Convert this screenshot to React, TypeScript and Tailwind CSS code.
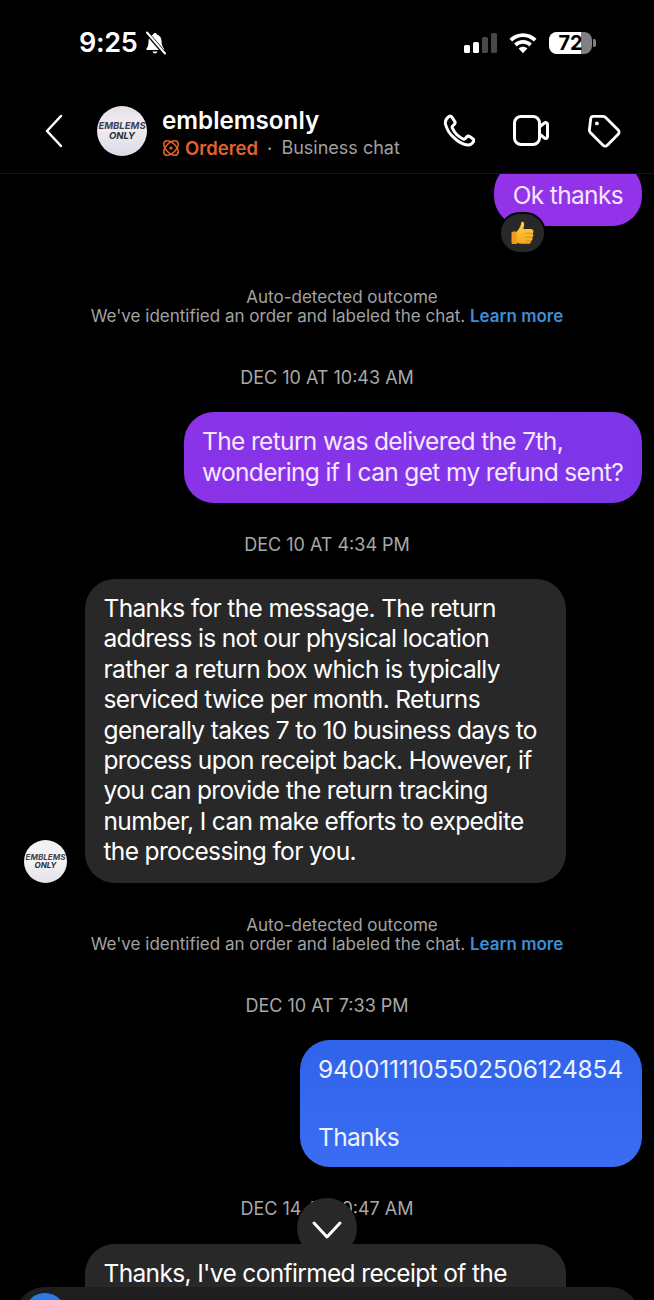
import React from "react";

function Logo({ big }: { big?: boolean }) {
  return (
    <div
      className={
        big
          ? "w-[50px] h-[50px] shrink-0 rounded-full bg-[linear-gradient(180deg,#e6dfe4_0%,#f0eef0_40%,#d9dbe6_100%)] flex flex-col items-center justify-center overflow-hidden"
          : "w-[43px] h-[43px] shrink-0 rounded-full bg-[linear-gradient(180deg,#f2f0f2_0%,#f5f4f5_45%,#e2e2e8_100%)] flex flex-col items-center justify-center overflow-hidden"
      }
    >
      <span
        className={
          big
            ? "text-[9.500px] leading-[10px] font-bold italic text-[#3f3f5c] whitespace-nowrap"
            : "text-[8px] leading-[8px] font-bold italic text-[#44444e] whitespace-nowrap"
        }
      >
        EMBLEMS
      </span>
      <span
        className={
          big
            ? "text-[9.500px] leading-[10px] font-bold italic text-[#2b2b35]"
            : "text-[8px] leading-[8px] font-bold italic text-[#2b2b35]"
        }
      >
        ONLY
      </span>
    </div>
  );
}

function StatusBar() {
  return (
    <div className="h-[88px] flex items-start justify-between pt-[25px] pl-[79px] pr-[58px]">
      <div className="flex items-center gap-[7px]">
        <span className="text-[27px] leading-[36px] font-semibold text-white tracking-[-0.3px]">9:25</span>
        <svg width="22" height="24" viewBox="0 0 22 24" className="text-white">
          <path
            fill="currentColor"
            d="M11 2c1 0 1.700.7 1.800 1.500 3 .8 4.700 3.300 4.700 6.500 0 3.500.8 5.500 2.500 7.500.4.500.1 1.500-.7 1.500H3.200c-.8 0-1.100-1-.7-1.500C4.200 15.500 4.500 13.500 4.500 10c0-3.200 1.700-5.700 4.700-6.500C9.300 2.700 10 2 11 2zM8.500 20.500h5c-.3 1.300-1.300 2-2.500 2s-2.200-.7-2.500-2z"
          />
          <path d="M2 1l19 22" stroke="#000" strokeWidth="4" />
          <path d="M3 1.500l18 21" stroke="#fff" strokeWidth="2" strokeLinecap="round" />
        </svg>
      </div>
      <div className="flex items-center gap-[12px] h-[36px]">
        <div className="flex items-end gap-[3px] h-[22px] pb-[1px]">
          <div className="w-[6px] h-[8px] rounded-[1.500px] bg-white" />
          <div className="w-[6px] h-[11px] rounded-[1.500px] bg-white" />
          <div className="w-[6px] h-[16px] rounded-[1.500px] bg-[#484848]" />
          <div className="w-[6px] h-[20px] rounded-[1.500px] bg-[#484848]" />
        </div>
        <svg width="28" height="21" viewBox="0 0 30 22">
          <path fill="#fff" d="M15 0c5.700 0 10.800 2.200 14.500 5.900l-2.800 3C23.700 6 19.600 4.100 15 4.100S6.300 6 3.300 8.900L.5 5.900C4.200 2.200 9.300 0 15 0z" />
          <path fill="#fff" d="M15 7.300c3.700 0 7 1.400 9.500 3.800l-2.800 3c-1.700-1.700-4.100-2.700-6.700-2.700s-5 1-6.700 2.700l-2.800-3C8 8.700 11.300 7.300 15 7.300z" />
          <path fill="#fff" d="M15 14.500c1.800 0 3.500.7 4.700 1.900L15 21.500l-4.700-5.100c1.200-1.200 2.900-1.900 4.700-1.900z" />
        </svg>
        <div className="flex items-center gap-[1px]">
          <div className="relative w-[43px] h-[22px] rounded-[8px] bg-[#808080] overflow-hidden">
            <div className="absolute left-0 top-0 bottom-0 w-[74%] bg-white" />
            <span className="absolute inset-0 flex items-center justify-center text-[20px] font-bold text-black leading-none">
              72
            </span>
          </div>
          <div className="w-[3px] h-[8px] rounded-r-[2px] bg-[#808080]" />
        </div>
      </div>
    </div>
  );
}

function Header() {
  return (
    <div className="h-[86px] flex items-center border-b border-[#161616] pl-[44px] pr-[33px]">
      <svg width="20" height="34" viewBox="0 0 20 34" fill="none" stroke="#fff" strokeWidth="2.500" strokeLinecap="round" strokeLinejoin="round">
        <path d="M17 2 L3 17 L17 32" />
      </svg>
      <div className="ml-[33px] mr-[15px]">
        <Logo big />
      </div>
      <div className="flex-1 mt-[6px]">
        <div className="text-[24.200px] leading-[29px] font-semibold text-white">emblemsonly</div>
        <div className="flex items-center text-[18.500px] leading-[26px]">
          <svg width="18" height="18" viewBox="0 0 18 18" fill="none" stroke="#e2622c" strokeWidth="1.600" className="mr-[5px]">
            <ellipse cx="9" cy="9" rx="9" ry="5" transform="rotate(45 9 9)" />
            <ellipse cx="9" cy="9" rx="9" ry="5" transform="rotate(-45 9 9)" />
            <circle cx="9" cy="9" r="1.600" fill="#e2622c" stroke="none" />
          </svg>
          <span className="font-semibold text-[#e2622c]">Ordered</span>
          <span className="text-[#a0a0a0] mx-[9px]">·</span>
          <span className="text-[18px] text-[#a0a0a0]">Business chat</span>
        </div>
      </div>
      <div className="flex items-center gap-[38px]">
        <svg width="34" height="34" viewBox="0 0 34 34" fill="none" stroke="#fff" strokeWidth="3" strokeLinejoin="round" className="-ml-[1px]">
          <path d="M8 2.500c1-.6 2.200-.4 2.900.6l2.800 4.200c.6 1 .5 2.100-.3 2.900l-1.800 1.800c-.5.5-.6 1.100-.3 1.800 1 2.400 2.600 4.800 4.400 6.700 1.900 1.900 4.100 3.400 6.500 4.500.7.300 1.300.200 1.800-.3l1.800-1.800c.8-.8 2-.9 2.900-.3l3.100 2.100c1 .7 1.300 2 .6 3-1.300 2-3.300 3.600-5.800 3.300-4.500-.5-9.700-3.400-13.700-7.400C8.700 20 5.500 14.500 4.500 10 4 7.200 5.800 4 8 2.500z" />
        </svg>
        <svg width="36" height="31" viewBox="0 0 36 31" fill="none" stroke="#fff" strokeWidth="3" strokeLinejoin="round">
          <rect x="1.500" y="1.500" width="25" height="28" rx="6.500" />
          <path d="M27 11.500l4.500-3.500c1.200-.9 3-.2 3 1.300v12.400c0 1.500-1.800 2.200-3 1.300L27 19.500" />
        </svg>
        <svg width="34" height="34" viewBox="0 0 36 36" fill="none" stroke="#fff" strokeWidth="3" strokeLinejoin="round">
          <path d="M4 4.500c.3-1.200 1.300-2 2.500-2L17 2.500c1 0 1.800.4 2.500 1L33 17c1.300 1.300 1.300 3.200 0 4.500L21.500 33c-1.300 1.300-3.200 1.300-4.500 0L3.500 19.500c-.7-.7-1-1.500-1-2.500z" />
          <circle cx="10.500" cy="10" r="2" fill="#fff" stroke="none" />
        </svg>
      </div>
    </div>
  );
}

function Thumb() {
  return (
    <svg width="23" height="24" viewBox="0 0 23 24">
      <defs>
        <linearGradient id="thumbFill" x1="0" y1="0" x2="0" y2="1">
          <stop offset="0" stopColor="#ffd23f" />
          <stop offset="1" stopColor="#f6a623" />
        </linearGradient>
      </defs>
      <rect x="0.500" y="10.500" width="6" height="12.500" rx="1.500" fill="#ef9a1e" />
      <path
        fill="url(#thumbFill)"
        d="M10.500.8c1.600-.6 2.800.6 2.700 2.400-.1 1.800-.6 3.400-.9 4.800h7.400c1.700 0 2.800 1.100 2.800 2.400 0 .9-.5 1.600-1.100 2 .7.500 1 1.100 1 1.900 0 1-.6 1.700-1.300 2.100.4.500.6 1 .5 1.700-.1.900-.7 1.500-1.500 1.800.2 1.400-.8 2.900-2.800 2.900H10c-2 0-3.500-.7-4.500-1.700V11c2.200-2.500 4.300-5 5-10.200z"
      />
      <path d="M14.500 12.300h7M14.500 16.100h6.800M15 19.900h5" stroke="#d98a1a" strokeWidth="0.900" fill="none" />
    </svg>
  );
}

function Outcome() {
  return (
    <div className="text-center text-[17px] leading-[19px] text-[#a3a3a3]">
      <div className="pl-[30px]">Auto-detected outcome</div>
      <div>
        We've identified an order and labeled the chat.{" "}
        <span className="font-semibold text-[#3b8ed8]">Learn more</span>
      </div>
    </div>
  );
}

function Stamp({ children, className }: { children: React.ReactNode; className: string }) {
  return (
    <div className={"text-center text-[18px] leading-[24px] text-[#a8a8a8] " + className}>{children}</div>
  );
}

export default function App() {
  return (
    <div
      className="relative w-[654px] h-[1300px] overflow-hidden bg-black text-white"
      style={{ fontFamily: "Inter, 'Liberation Sans', sans-serif" }}
    >
      <StatusBar />
      <Header />
      <div className="h-[1126px] overflow-hidden">
        <div className="flex justify-end pr-[12px] -mt-[12px]">
          <div className="relative h-[64px] pl-[19px] pr-[19px] flex items-end pb-[16px] rounded-[30px] bg-[#9233ea] text-[#f6e6ff] text-[24.500px] leading-[30px] tracking-[-0.65px]">
            Ok thanks
            <div className="absolute left-[5px] top-[50px] w-[47px] h-[42px] rounded-full bg-[#282828] border-2 border-black flex items-center justify-center">
              <Thumb />
            </div>
          </div>
        </div>

        <div className="mt-[62px]">
          <Outcome />
        </div>
        <Stamp className="mt-[40px]">DEC 10 AT 10:43 AM</Stamp>

        <div className="flex justify-end pr-[12px] mt-[22px]">
          <div className="w-[458px] h-[91px] pl-[18px] py-[14px] rounded-[30px] bg-[linear-gradient(90deg,#8a33e8,#7c36e8)] text-[#f6e6ff] text-[24.500px] leading-[31px] tracking-[-0.65px]">
            The return was delivered the 7th,
            <br />
            wondering if I can get my refund sent?
          </div>
        </div>

        <Stamp className="mt-[30px]">DEC 10 AT 4:34 PM</Stamp>

        <div className="flex items-end pl-[24px] gap-[18px] mt-[22px]">
          <Logo />
          <div className="w-[481px] rounded-[30px] bg-[#282828] pl-[18.500px] pt-[14px] pb-[16px] text-[24.500px] leading-[30.400px] tracking-[-0.65px]">
            Thanks for the message. The return
            <br />
            address is not our physical location
            <br />
            rather a return box which is typically
            <br />
            serviced twice per month. Returns
            <br />
            generally takes 7 to 10 business days to
            <br />
            process upon receipt back. However, if
            <br />
            you can provide the return tracking
            <br />
            number, I can make efforts to expedite
            <br />
            the processing for you.
          </div>
        </div>

        <div className="mt-[33px]">
          <Outcome />
        </div>
        <Stamp className="mt-[40px]">DEC 10 AT 7:33 PM</Stamp>

        <div className="flex justify-end pr-[12px] mt-[22px]">
          <div className="w-[342px] h-[127px] pl-[18px] pt-[12px] rounded-[30px] bg-[linear-gradient(180deg,#2f63ea,#3a6df2)] text-[#eef2ff] text-[24.500px] leading-[34px] tracking-[-0.2px]">
            9400111105502506124854
            <br />
            <br />
            <span className="tracking-[-0.65px]">Thanks</span>
          </div>
        </div>

        <Stamp className="mt-[30px]">DEC 14 AT 10:47 AM</Stamp>

        <div className="pl-[85px] mt-[23px]">
          <div className="w-[481px] h-[90px] rounded-[30px] bg-[#282828] pl-[18.500px] pt-[14px] text-[24.500px] leading-[30.400px] tracking-[-0.65px]">
            Thanks, I've confirmed receipt of the
          </div>
        </div>
      </div>

      <div className="absolute left-[297px] top-[1198px] w-[60px] h-[60px] rounded-full bg-[#282828] flex items-center justify-center">
        <svg width="32" height="20" viewBox="0 0 32 20" fill="none" stroke="#fff" strokeWidth="3" strokeLinecap="round" strokeLinejoin="round" className="mt-[3px]">
          <path d="M3 3 L16 17 L29 3" />
        </svg>
      </div>

      <div className="absolute left-[15px] top-[1287px] w-[625px] h-[60px] rounded-[30px] bg-[#1e1e1e]">
        <div className="absolute left-[9px] top-[6px] w-[42px] h-[42px] rounded-full bg-[#2a7be8]" />
      </div>
    </div>
  );
}
